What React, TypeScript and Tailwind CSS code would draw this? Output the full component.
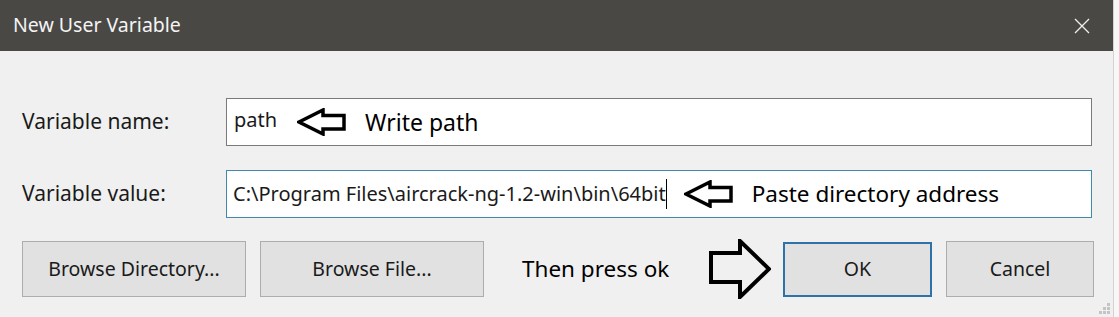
import React from "react";

const font = { fontFamily: '"Noto Sans", "Open Sans", sans-serif' };

function LeftArrow({ className }: { className?: string }) {
  return (
    <svg width="49" height="28" viewBox="0 0 49 28" className={className}>
      <polygon
        points="2,14 26,2 26,7.5 47,7.5 47,21 26,21 26,26"
        fill="white"
        stroke="black"
        strokeWidth="3.5"
        strokeLinejoin="miter"
      />
    </svg>
  );
}

function RightArrow() {
  return (
    <svg width="62" height="60" viewBox="0 0 62 60" className="shrink-0">
      <polygon
        points="2,14 31,14 31,2 60,30 31,58 31,43 2,43"
        fill="#f0f0f0"
        stroke="black"
        strokeWidth="4"
        strokeLinejoin="miter"
      />
    </svg>
  );
}

export default function App() {
  return (
    <div className="flex w-[1119px] h-[317px] overflow-hidden bg-[#f6f6f6]" style={font}>
      <div className="flex flex-col w-[1114px] h-full border-r border-[#d2d2d2]">
        <div className="h-[51px] bg-[#4a4845] flex items-center justify-between pl-[13px] pr-[23px]">
          <span className="text-[19.5px] text-[#f4f4f4] leading-none pb-[2px]">New User Variable</span>
          <svg width="16" height="16" viewBox="0 0 16 16">
            <path d="M1 1 L15 15 M15 1 L1 15" stroke="#f0f0f0" strokeWidth="1.3" />
          </svg>
        </div>
        <div className="relative flex-1 bg-[#f0f0f0] pl-[22px] pt-[47px] text-[#1a1a1a]">
          <div className="flex items-center h-[48px]">
            <div className="w-[204px] text-[21px]">Variable name:</div>
            <div className="flex items-center w-[866px] h-[48px] bg-white border border-[#7a7a7a] pl-[7px]">
              <span className="text-[20px] pb-[4px]">path</span>
              <LeftArrow className="ml-[20px] shrink-0" />
              <span className="ml-[19px] text-[23px] text-black">Write path</span>
            </div>
          </div>
          <div className="flex items-center h-[48px] mt-[24px]">
            <div className="w-[204px] text-[21px]">Variable value:</div>
            <div className="flex items-center w-[866px] h-[48px] bg-white border border-[#3f8bac] pl-[6px]">
              <span className="text-[20px]">C:\Program Files\aircrack-ng-1.2-win\bin\64bit</span>
              <span className="w-[1px] h-[30px] bg-black" />
              <LeftArrow className="ml-[17px] shrink-0" />
              <span className="ml-[19px] text-[22.5px] text-black">Paste directory address</span>
            </div>
          </div>
          <div className="flex items-center h-[56px] mt-[23px]">
            <button className="w-[224px] h-[56px] bg-[#e1e1e1] border border-[#adadad] text-[19.5px] text-[#1a1a1a]">
              Browse Directory...
            </button>
            <button className="ml-[14px] w-[224px] h-[56px] bg-[#e1e1e1] border border-[#adadad] text-[19.5px] text-[#1a1a1a]">
              Browse File...
            </button>
            <span className="ml-[38px] text-[22.5px] text-black w-[149px] whitespace-nowrap">Then press ok</span>
            <div className="ml-[38px]">
              <RightArrow />
            </div>
            <button className="ml-[12px] w-[149px] h-[55px] bg-[#e1e1e1] border-2 border-[#2e72aa] text-[19.5px] text-[#1a1a1a]">
              OK
            </button>
            <button className="ml-[14px] w-[148px] h-[56px] bg-[#e1e1e1] border border-[#adadad] text-[19.5px] text-[#1a1a1a]">
              Cancel
            </button>
          </div>
          <svg width="12" height="12" viewBox="0 0 12 12" className="absolute right-[2px] bottom-[2px]">
            <rect x="8" y="0" width="3" height="3" fill="#c4c4c4" />
            <rect x="4" y="4" width="3" height="3" fill="#c4c4c4" />
            <rect x="8" y="4" width="3" height="3" fill="#c4c4c4" />
            <rect x="0" y="8" width="3" height="3" fill="#c4c4c4" />
            <rect x="4" y="8" width="3" height="3" fill="#c4c4c4" />
            <rect x="8" y="8" width="3" height="3" fill="#c4c4c4" />
          </svg>
        </div>
      </div>
      <div className="flex-1 bg-[#f7f7f7]" />
    </div>
  );
}
